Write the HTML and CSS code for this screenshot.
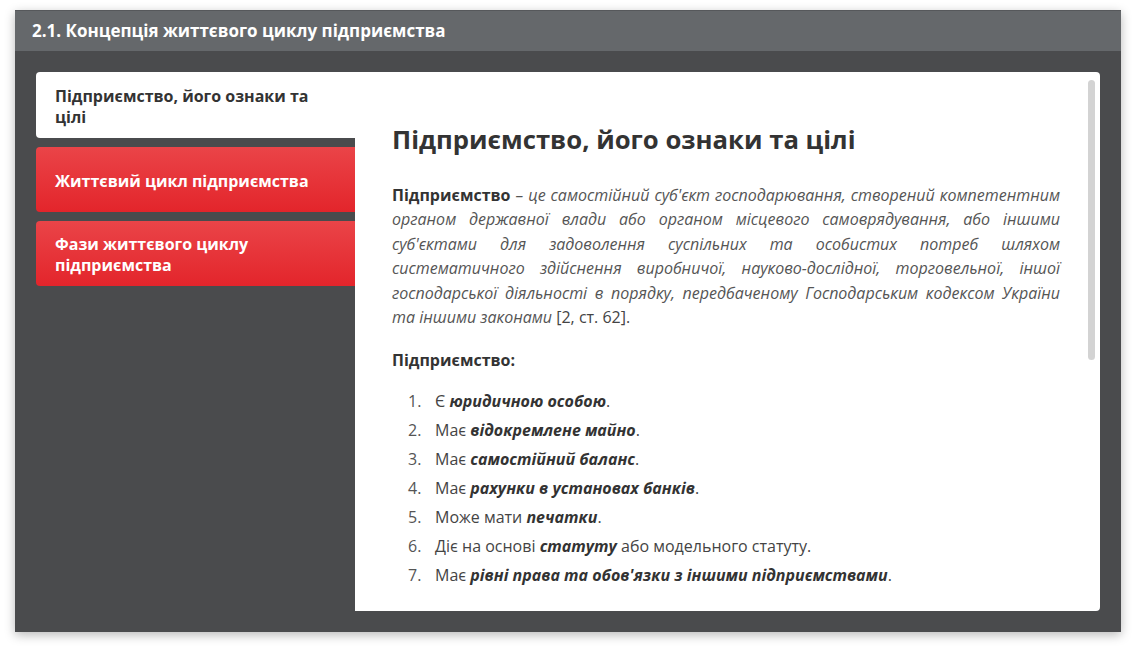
FILE: index.html
```html
<!DOCTYPE html>
<html lang="uk">
<head>
<meta charset="utf-8">
<title>Концепція життєвого циклу підприємства</title>
<link rel="stylesheet" href="styles.css">
</head>
<body>
<div class="window">
  <div class="window-header">2.1. Концепція життєвого циклу підприємства</div>
  <div class="window-body">
    <nav class="tabs">
      <div class="tab tab-active">Підприємство, його ознаки та цілі</div>
      <div class="tab tab-red">Життєвий цикл підприємства</div>
      <div class="tab tab-red">Фази життєвого циклу підприємства</div>
    </nav>
    <section class="panel">
      <div class="panel-content">
        <h2 class="panel-title">Підприємство, його ознаки та цілі</h2>
        <p class="definition"><b>Підприємство</b> <i>– це самостійний суб'єкт господарювання, створений компетентним органом державної влади або органом місцевого самоврядування, або іншими суб'єктами для задоволення суспільних та особистих потреб шляхом систематичного здійснення виробничої, науково-дослідної, торговельної, іншої господарської діяльності в порядку, передбаченому Господарським кодексом України та іншими законами</i> [2, ст. 62].</p>
        <p class="subhead">Підприємство:</p>
        <ol class="features">
          <li><span class="num">1.</span><span>Є <b><i>юридичною особою</i></b>.</span></li>
          <li><span class="num">2.</span><span>Має <b><i>відокремлене майно</i></b>.</span></li>
          <li><span class="num">3.</span><span>Має <b><i>самостійний баланс</i></b>.</span></li>
          <li><span class="num">4.</span><span>Має <b><i>рахунки в установах банків</i></b>.</span></li>
          <li><span class="num">5.</span><span>Може мати <b><i>печатки</i></b>.</span></li>
          <li><span class="num">6.</span><span>Діє на основі <b><i>статуту</i></b> або модельного статуту.</span></li>
          <li><span class="num">7.</span><span>Має <b><i>рівні права та обов'язки з іншими підприємствами</i></b>.</span></li>
        </ol>
      </div>
      <div class="scroll-thumb"></div>
    </section>
  </div>
</div>
</body>
</html>
```
FILE: styles.css
```css
html, body {
  margin: 0;
  padding: 0;
  background: #ffffff;
}
body {
  font-family: "Open Sans", "Noto Sans", sans-serif;
  width: 1136px;
  height: 653px;
  overflow: hidden;
}
.window {
  margin: 10px 0 0 15px;
  width: 1106px;
  height: 622px;
  display: flex;
  flex-direction: column;
  box-shadow: 0 3px 10px rgba(0, 0, 0, 0.28);
  background: #4a4b4d;
}
.window-header {
  height: 41px;
  flex: none;
  box-sizing: border-box;
  background: #65686b;
  border-top: 1px solid #56585b;
  color: #ffffff;
  font-size: 17px;
  font-weight: 700;
  line-height: 40px;
  padding-left: 17px;
}
.window-body {
  flex: 1;
  display: flex;
  padding: 21px;
  min-height: 0;
}
.tabs {
  width: 319px;
  flex: none;
  display: flex;
  flex-direction: column;
  gap: 9px;
}
.tab {
  display: flex;
  align-items: center;
  box-sizing: border-box;
  padding: 3px 30px 0 19px;
  font-size: 16px;
  font-weight: 700;
  line-height: 21px;
  border-radius: 4px 0 0 4px;
}
.tab-active {
  height: 66px;
  background: #ffffff;
  color: #333333;
}
.tab-red {
  height: 65px;
  color: #ffffff;
  background: linear-gradient(#ea4448, #e3252b);
}
.panel {
  position: relative;
  flex: 1;
  background: #ffffff;
  border-radius: 0 4px 4px 0;
  overflow: hidden;
}
.panel-content {
  padding: 50px 40px 0 37px;
  color: #444444;
}
.panel-title {
  margin: 0;
  font-size: 25.7px;
  font-weight: 700;
  line-height: 36px;
  color: #333333;
}
.definition {
  margin: 25px 0 0;
  font-size: 16px;
  line-height: 24.4px;
  text-align: justify;
  color: #444444;
}
.definition b {
  color: #333333;
}
.definition i {
  color: #555555;
}
.subhead {
  margin: 19px 0 0;
  font-size: 16px;
  font-weight: 700;
  line-height: 24px;
  color: #333333;
}
.features {
  list-style: none;
  margin: 15px 0 0;
  padding: 0 0 0 16px;
  font-size: 16px;
  color: #444444;
}
.features li {
  display: flex;
  height: 29px;
  line-height: 29px;
}
.features .num {
  width: 27px;
  flex: none;
  color: #555555;
}
.features b {
  color: #333333;
}
.scroll-thumb {
  position: absolute;
  top: 8px;
  right: 5px;
  width: 7px;
  height: 280px;
  border-radius: 4px;
  background: #d3d3d3;
}
```
